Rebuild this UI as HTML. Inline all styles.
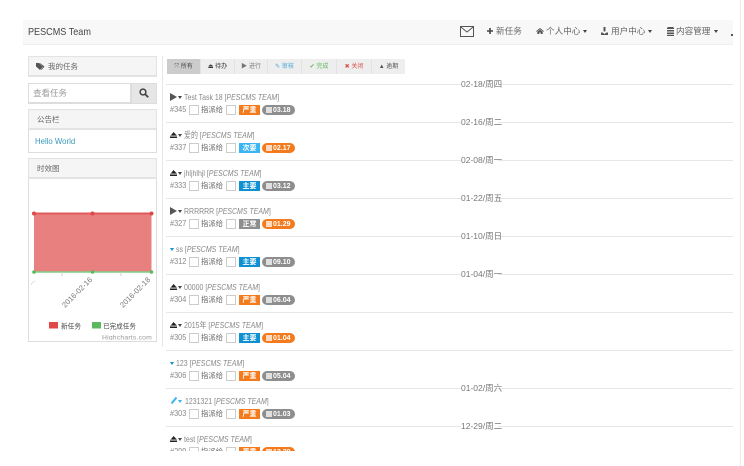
<!DOCTYPE html>
<html><head><meta charset="utf-8"><style>
html,body{margin:0;padding:0;background:#fff}
#p{position:relative;width:744px;height:466px;overflow:hidden;background:#fff;font-family:"Liberation Sans","Noto Sans CJK SC",sans-serif;color:#666;font-size:9px;filter:blur(.35px)}
#p div,#p svg.a{position:absolute;white-space:nowrap}
.box{background:#fff;border:1px solid #ddd;box-sizing:border-box}
.head{background:#f5f5f5;border:1px solid #e3e3e3;border-bottom-width:2px;box-sizing:border-box;line-height:19px;padding-left:8px;font-size:7.5px;color:#666}
.l{left:166px;width:567px;height:1px;background:#e6e6e6}
.d{left:461px;background:#fff;font-size:8.5px;color:#777;line-height:10px;height:10px;width:37px}
.t{font-size:8.5px;line-height:11px;color:#888;transform:scaleX(.82);transform-origin:0 0}
.t i{font-style:italic}
.n{left:170px;font-size:8.5px;line-height:11px;color:#888;transform:scaleX(.86);transform-origin:0 0}
.c{width:10px;height:10px;border:1px solid #ccc;background:#fff;box-sizing:border-box}
.z{left:201px;font-size:7.4px;line-height:11px;color:#666}
.b{left:239px;width:21px;height:10px;line-height:11px;text-align:center;color:#fff;font-size:7px;font-weight:bold}
.o{left:262px;width:33px;height:10px;border-radius:6px;line-height:11px;color:#fff;font-size:7px;font-weight:bold;background:#8e8e8e;padding-left:11px;box-sizing:border-box}
.o:before{content:"";position:absolute;left:4px;top:2px;width:6px;height:6px;background:rgba(255,255,255,.72)}
.tab{top:59px;height:15px;line-height:16.500px;background:#eee;border-right:1px solid #e2e2e2;font-size:6px;text-align:center;color:#777;box-sizing:border-box}
.nav{top:25px;line-height:13px;font-size:8.6px;color:#666}
.car{width:0;height:0;border-left:2.500px solid transparent;border-right:2.500px solid transparent;border-top:3px solid #444}
.ip{left:170px;width:7px;height:8px;background:#555;clip-path:polygon(0 0,100% 50%,0 100%)}
.ie{left:170px;width:7px;height:6px;background:#222;clip-path:polygon(0 75%,100% 75%,100% 100%,0 100%,0 75%,50% 0,100% 60%,0 60%)}
</style></head><body><div id="p">

<div style="left:23px;top:20px;width:710px;height:25px;background:#f8f8f8;border-bottom:1px solid #eee;box-sizing:border-box"></div>
<div style="left:28px;top:25px;font-size:10.5px;line-height:14px;color:#444;transform:scaleX(.865);transform-origin:0 0">PESCMS Team</div>
<svg class="a" style="left:460px;top:26px" width="14" height="11" viewBox="0 0 14 11"><rect x=".5" y=".5" width="13" height="10" fill="none" stroke="#555"/><path d="M.8 1l6.200 5 6.200-5" fill="none" stroke="#555"/></svg>
<svg class="a" style="left:487px;top:28px" width="6" height="6" viewBox="0 0 6 6"><path d="M2.200 0h1.600v2.200H6v1.600H3.800V6H2.200V3.800H0V2.200h2.200z" fill="#444"/></svg>
<div class="nav" style="left:496px">新任务</div>
<svg class="a" style="left:536px;top:28px" width="8" height="6" viewBox="0 0 8 6"><path d="M4 0L8 3.200 7.400 3.800 4 1.200.6 3.800 0 3.200zM1.300 3.800L4 1.800l2.700 2V6H4.700V4.500H3.300V6h-2z" fill="#555"/></svg>
<div class="nav" style="left:546px">个人中心</div><div class="car" style="left:583px;top:30px"></div>
<svg class="a" style="left:601px;top:27px" width="7" height="8" viewBox="0 0 7 8"><path d="M2.500 0h2v3.500l-.3 1h-1.400l-.3-1zM0 5.500h1.500L3.500 7l2-1.500H7V8H0z" fill="#555"/></svg>
<div class="nav" style="left:611px">用户中心</div><div class="car" style="left:648px;top:30px"></div>
<svg class="a" style="left:667px;top:27px" width="7" height="9" viewBox="0 0 7 9"><path d="M1 0h5l1 1v1H0V1zM0 3h7v1.500H0zM0 5.500h7V7H0zM0 7.800h7V9H0z" fill="#555"/></svg>
<div class="nav" style="left:676px">内容管理</div><div class="car" style="left:714px;top:30px"></div>
<div style="left:731px;top:34px;width:2px;height:1.500px;background:#555"></div>
<div style="left:740px;top:0;width:1px;height:466px;background:#eaeaea"></div>

<div class="head" style="left:28px;top:56px;width:129px;height:21px;padding-left:19px">我的任务</div>
<svg class="a" style="left:36px;top:63px" width="9" height="7" viewBox="0 0 9 7"><path d="M0 0h3l4 3.500L4 7 0 3.500zM4 0l4.500 3.500L5.500 7 5 6.500l2.200-3L3.500 0z" fill="#555"/></svg>
<div class="box" style="left:28px;top:83px;width:103px;height:21px;border-color:#ddd;border-bottom-width:2px;line-height:18px;padding-left:4px;font-size:8.500px;color:#999">查看任务</div>
<div style="left:131px;top:83px;width:26px;height:21px;background:#e6e6e6;box-sizing:border-box;border:1px solid #ddd"></div>
<svg class="a" style="left:139px;top:88px" width="10" height="10" viewBox="0 0 10 10"><circle cx="4" cy="4" r="2.900" fill="none" stroke="#444" stroke-width="1.500"/><path d="M6.200 6.200l3 3" stroke="#444" stroke-width="1.800"/></svg>

<div class="box" style="left:28px;top:109px;width:129px;height:44px"></div>
<div class="head" style="left:28px;top:109px;width:129px;height:21px">公告栏</div>
<div style="left:35px;top:136px;font-size:7.800px;line-height:11px;color:#3a9bbd">Hello World</div>

<div class="box" style="left:28px;top:158px;width:129px;height:184px"></div>
<div class="head" style="left:28px;top:158px;width:129px;height:21px">时效图</div>
<svg class="a" style="left:28px;top:180px" width="129" height="160" viewBox="0 0 129 160">
<rect x="6" y="33.500" width="117.500" height="58.500" fill="#e88080"/>
<path d="M6 33.500h117.500" stroke="#e05a5a" stroke-width="2"/>
<path d="M6 92h117.500" stroke="#7fcf85" stroke-width="1.500"/>
<path d="M34 92v4M93 92v4" stroke="#ccc"/>
<g fill="#e04848"><circle cx="6" cy="33.500" r="2"/><circle cx="64.500" cy="33.500" r="2"/><circle cx="123.500" cy="33.500" r="2"/></g>
<g fill="#5cb85c"><circle cx="6" cy="92" r="1.800"/><circle cx="64.500" cy="92" r="1.800"/><circle cx="123.500" cy="92" r="1.800"/></g>
<text x="3" y="105" font-size="7" fill="#999" transform="rotate(-45 3 105)" font-family="Liberation Sans">...</text>
<text x="37" y="128" font-size="7.500" fill="#777" letter-spacing=".1" transform="rotate(-45 37 128)" font-family="Liberation Sans">2016-02-16</text>
<text x="95" y="128" font-size="7.500" fill="#777" letter-spacing=".1" transform="rotate(-45 95 128)" font-family="Liberation Sans">2016-02-18</text>
<rect x="21" y="142" width="9" height="6.500" fill="#e04848"/>
<text x="33" y="148.500" font-size="6.700" fill="#444" font-family="Liberation Sans,Noto Sans CJK SC">新任务</text>
<rect x="64" y="142" width="9" height="6.500" fill="#5cb85c"/>
<text x="75" y="148.500" font-size="6.600" fill="#444" font-family="Liberation Sans,Noto Sans CJK SC">已完成任务</text>
<text x="74" y="159.500" font-size="6.800" fill="#999" letter-spacing=".2" font-family="Liberation Sans">Highcharts.com</text>
</svg>

<div style="left:162px;top:56px;width:1px;height:291px;background:#e6e6e6"></div>

<div style="left:167px;top:59px;width:238px;height:15px;background:#eee"></div>
<div class="tab" style="left:167px;width:34px;background:#ccc;color:#444">⤧ 所有</div>
<div class="tab" style="left:201px;width:34px;color:#333">⏏ 待办</div>
<div class="tab" style="left:235px;width:33px">▶ 进行</div>
<div class="tab" style="left:268px;width:34px;color:#4aa8dc">✎ 审核</div>
<div class="tab" style="left:302px;width:35px;color:#5cb85c">✔ 完成</div>
<div class="tab" style="left:337px;width:35px;color:#d9534f">✖ 关闭</div>
<div class="tab" style="left:372px;width:33px;color:#555;border:0">▲ 逾期</div>

<div class="l" style="top:84px"></div><div class="d" style="top:79px">02-18/周四</div>
<div class="l" style="top:122px"></div><div class="d" style="top:117px">02-16/周二</div>
<div class="l" style="top:160px"></div><div class="d" style="top:155px">02-08/周一</div>
<div class="l" style="top:198px"></div><div class="d" style="top:193px">01-22/周五</div>
<div class="l" style="top:236px"></div><div class="d" style="top:231px">01-10/周日</div>
<div class="l" style="top:274px"></div><div class="d" style="top:269px">01-04/周一</div>
<div class="l" style="top:312px"></div>
<div class="l" style="top:350px"></div>
<div class="l" style="top:388px"></div><div class="d" style="top:383px">01-02/周六</div>
<div class="l" style="top:426px"></div><div class="d" style="top:421px">12-29/周二</div>

<div class="ip" style="top:93px"></div><div class="car" style="left:178px;top:96px"></div>
<div class="t" style="left:184px;top:92px">Test Task 18 [<i>PESCMS TEAM</i>]</div>
<div class="n" style="top:104px">#345</div><div class="c" style="left:189px;top:105px"></div><div class="z" style="top:104px">指派给</div><div class="c" style="left:226px;top:105px"></div><div class="b" style="top:105px;background:#f37b1d">严重</div><div class="o" style="top:105px">03.18</div>

<div class="ie" style="top:132px"></div><div class="car" style="left:178px;top:134px"></div>
<div class="t" style="left:184px;top:130px">爱的 [<i>PESCMS TEAM</i>]</div>
<div class="n" style="top:142px">#337</div><div class="c" style="left:189px;top:143px"></div><div class="z" style="top:142px">指派给</div><div class="c" style="left:226px;top:143px"></div><div class="b" style="top:143px;background:#3bb4f2">次要</div><div class="o" style="top:143px;background:#f37b1d">02.17</div>

<div class="ie" style="top:170px"></div><div class="car" style="left:178px;top:172px"></div>
<div class="t" style="left:184px;top:168px">jhljhlhjl [<i>PESCMS TEAM</i>]</div>
<div class="n" style="top:180px">#333</div><div class="c" style="left:189px;top:181px"></div><div class="z" style="top:180px">指派给</div><div class="c" style="left:226px;top:181px"></div><div class="b" style="top:181px;background:#0e90d2">主要</div><div class="o" style="top:181px">03.12</div>

<div class="ip" style="top:207px"></div><div class="car" style="left:178px;top:210px"></div>
<div class="t" style="left:184px;top:206px">RRRRRR [<i>PESCMS TEAM</i>]</div>
<div class="n" style="top:218px">#327</div><div class="c" style="left:189px;top:219px"></div><div class="z" style="top:218px">指派给</div><div class="c" style="left:226px;top:219px"></div><div class="b" style="top:219px;background:#8e8e8e">正常</div><div class="o" style="top:219px;background:#f37b1d">01.29</div>

<div class="car" style="left:170px;top:248px;border-top-color:#0e90d2"></div>
<div class="t" style="left:176px;top:244px">ss [<i>PESCMS TEAM</i>]</div>
<div class="n" style="top:256px">#312</div><div class="c" style="left:189px;top:257px"></div><div class="z" style="top:256px">指派给</div><div class="c" style="left:226px;top:257px"></div><div class="b" style="top:257px;background:#0e90d2">主要</div><div class="o" style="top:257px">09.10</div>

<div class="ie" style="top:284px"></div><div class="car" style="left:178px;top:286px"></div>
<div class="t" style="left:184px;top:282px">00000 [<i>PESCMS TEAM</i>]</div>
<div class="n" style="top:294px">#304</div><div class="c" style="left:189px;top:295px"></div><div class="z" style="top:294px">指派给</div><div class="c" style="left:226px;top:295px"></div><div class="b" style="top:295px;background:#f37b1d">严重</div><div class="o" style="top:295px">06.04</div>

<div class="ie" style="top:322px"></div><div class="car" style="left:178px;top:324px"></div>
<div class="t" style="left:184px;top:320px">2015年 [<i>PESCMS TEAM</i>]</div>
<div class="n" style="top:332px">#305</div><div class="c" style="left:189px;top:333px"></div><div class="z" style="top:332px">指派给</div><div class="c" style="left:226px;top:333px"></div><div class="b" style="top:333px;background:#0e90d2">主要</div><div class="o" style="top:333px;background:#f37b1d">01.04</div>

<div class="car" style="left:170px;top:362px;border-top-color:#0e90d2"></div>
<div class="t" style="left:176px;top:358px">123 [<i>PESCMS TEAM</i>]</div>
<div class="n" style="top:370px">#306</div><div class="c" style="left:189px;top:371px"></div><div class="z" style="top:370px">指派给</div><div class="c" style="left:226px;top:371px"></div><div class="b" style="top:371px;background:#f37b1d">严重</div><div class="o" style="top:371px">05.04</div>

<svg class="a" style="left:170px;top:397px" width="7" height="8" viewBox="0 0 7 8"><path d="M6.500.5L1.500 6.500" stroke="#3bb4f2" stroke-width="2"/></svg><div class="car" style="left:178px;top:400px;border-top-color:#3bb4f2"></div>
<div class="t" style="left:185px;top:396px">1231321 [<i>PESCMS TEAM</i>]</div>
<div class="n" style="top:408px">#303</div><div class="c" style="left:189px;top:409px"></div><div class="z" style="top:408px">指派给</div><div class="c" style="left:226px;top:409px"></div><div class="b" style="top:409px;background:#f37b1d">严重</div><div class="o" style="top:409px">01.03</div>

<div class="ie" style="top:436px"></div><div class="car" style="left:178px;top:438px"></div>
<div class="t" style="left:184px;top:434px">test [<i>PESCMS TEAM</i>]</div>
<div class="n" style="top:446px">#299</div><div class="c" style="left:189px;top:447px"></div><div class="z" style="top:446px">指派给</div><div class="c" style="left:226px;top:447px"></div><div class="b" style="top:447px;background:#f37b1d">严重</div><div class="o" style="top:447px;background:#f37b1d">12.29</div>
<div style="left:0;top:451px;width:740px;height:15px;background:#fff"></div>
</div></body></html>
